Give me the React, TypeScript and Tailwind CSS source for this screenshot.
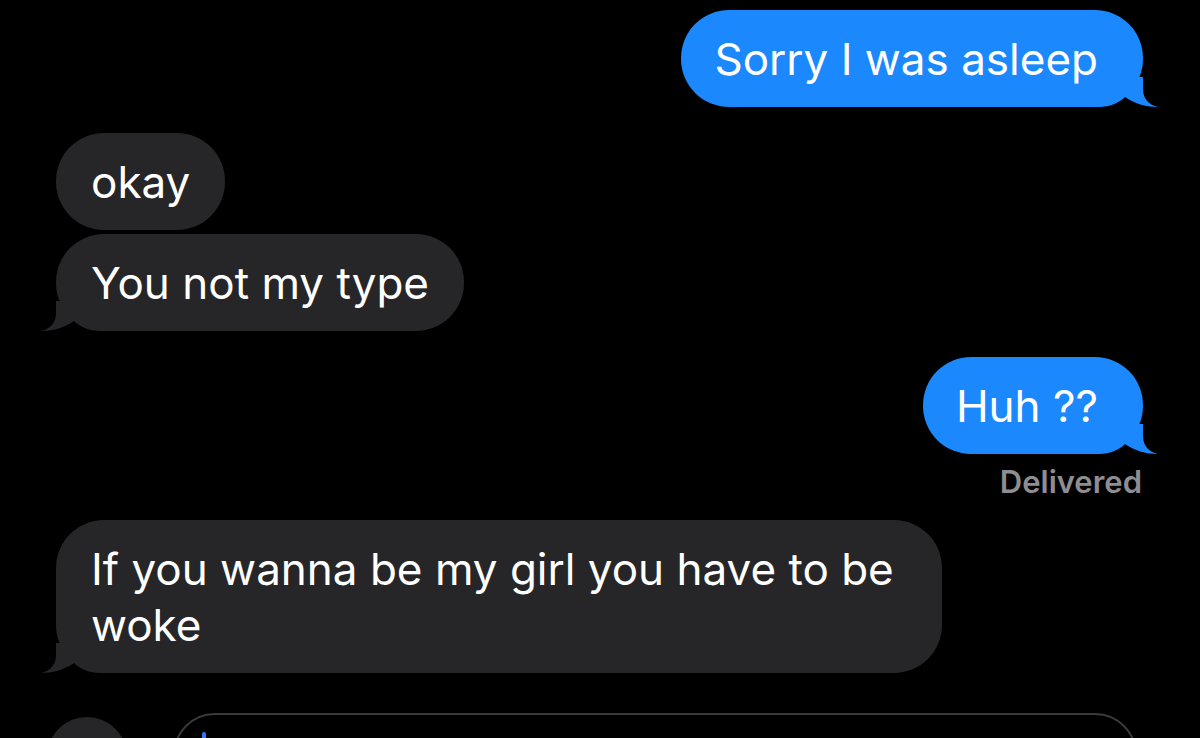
import React from 'react';

const BLUE = '#1b88fd';
const GRAY = '#262628';

const Tail = ({ side, color }: { side: 'left' | 'right'; color: string }) => (
  <svg
    width="70"
    height="30"
    viewBox="0 0 70 30"
    className={
      side === 'right'
        ? 'absolute bottom-0 right-[-15px]'
        : 'absolute bottom-0 left-[-15px] -scale-x-100'
    }
  >
    <path
      d="M0 0 L55 0 L55 12 C55 22 61 28 70 30 C59 30 47 27 37 20 C31 26 22 30 10 30 L0 30 Z"
      fill={color}
    />
  </svg>
);

const Bubble = ({
  children,
  side,
  tail,
  className = '',
}: {
  children: React.ReactNode;
  side: 'left' | 'right';
  tail?: boolean;
  className?: string;
}) => {
  const color = side === 'right' ? BLUE : GRAY;
  return (
    <div
      className={`relative rounded-[48px] py-[20.5px] text-[44px] leading-[56px] text-white ${
        side === 'right'
          ? 'self-end bg-[#1b88fd] pl-[33px] pr-[45px]'
          : 'self-start bg-[#262628] px-[35px]'
      } ${className}`}
    >
      {children}
      {tail && <Tail side={side} color={color} />}
    </div>
  );
};

export default function App() {
  return (
    <div className="h-[738px] w-full overflow-hidden bg-black font-['Inter','Noto_Sans',sans-serif]">
      <div className="flex flex-col pl-[56px] pr-[57px] pt-[10px]">
        <Bubble side="right" tail>
          Sorry I was asleep
        </Bubble>
        <Bubble side="left" className="mt-[26px]">
          okay
        </Bubble>
        <Bubble side="left" tail className="mt-[4px]">
          You not my type
        </Bubble>
        <Bubble side="right" tail className="mt-[26px]">
          Huh ??
        </Bubble>
        <div className="mt-[10px] self-end pr-[1px] text-[31px] font-semibold leading-[36px] text-[#8d8d92]">
          Delivered
        </div>
        <Bubble side="left" tail className="mt-[20px] w-[886px]">
          If you wanna be my girl you have to be woke
        </Bubble>
      </div>

      {/* compose bar */}
      <div className="mt-[40px] flex items-start pl-[47px] pr-[63px]">
        <div className="mt-[4px] h-[80px] w-[80px] shrink-0 rounded-full bg-[#262628]" />
        <div className="relative ml-[46px] h-[84px] flex-1 rounded-[42px] border-2 border-[#3a3a3c]">
          <div className="absolute left-[27px] top-[17px] h-[40px] w-[4px] rounded-full bg-[#3d74f6]" />
        </div>
      </div>
    </div>
  );
}
